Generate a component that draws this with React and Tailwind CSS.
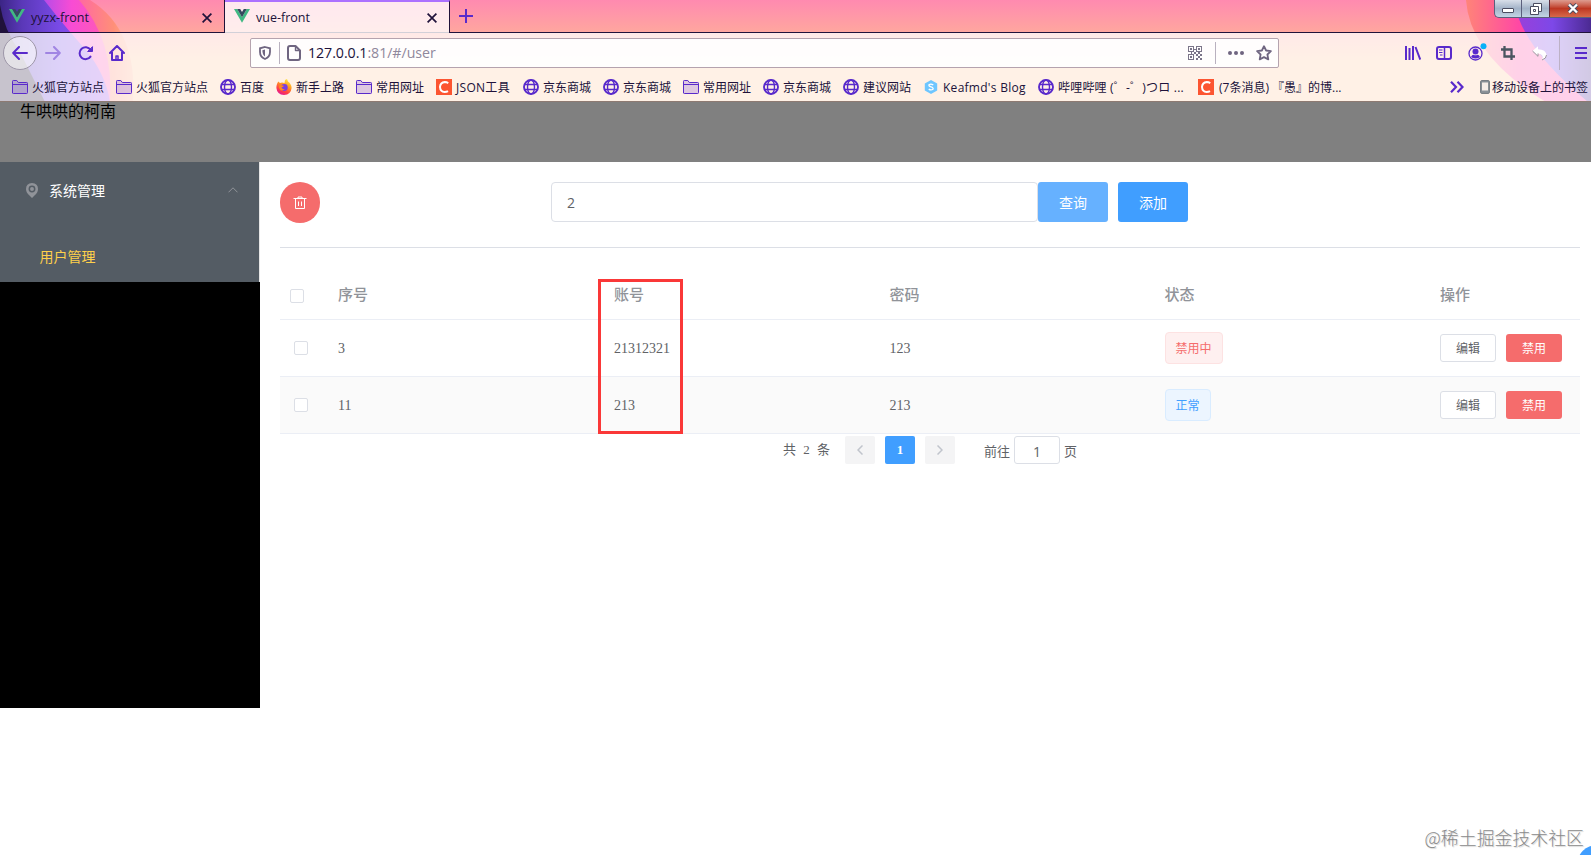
import { useState } from "react";
import clsx from "clsx";

const bookmarks = [
  { icon: "folder", label: "火狐官方站点", width: "w-[72px]" },
  { icon: "folder", label: "火狐官方站点", width: "w-[72px]" },
  { icon: "globe", label: "百度", width: "w-6" },
  { icon: "firefox", label: "新手上路", width: "w-12" },
  { icon: "folder", label: "常用网址", width: "w-12" },
  { icon: "csdn", label: "JSON工具", width: "w-[55px] tracking-[0.3px]" },
  { icon: "globe", label: "京东商城", width: "w-12" },
  { icon: "globe", label: "京东商城", width: "w-12" },
  { icon: "folder", label: "常用网址", width: "w-12" },
  { icon: "globe", label: "京东商城", width: "w-12" },
  { icon: "globe", label: "建议网站", width: "w-12" },
  { icon: "hexo", label: "Keafmd's Blog", width: "w-[83px] tracking-[0.27px]" },
  { icon: "globe", label: "哔哩哔哩 (゜-゜)つロ ...", width: "w-[128px] tracking-[0.2px]" },
  { icon: "csdn", label: "(7条消息) 『愚』的博...", width: "w-[130px] pl-px" },
];

const users = [
  { id: 3, account: "21312321", password: "123", disabled: true },
  { id: 11, account: "213", password: "213", disabled: false },
];

function VueLogo() {
  return (
    <svg width="16" height="14" viewBox="0 0 16 14" className="shrink-0">
      <path d="M0 0h3.2L8 8.2 12.8 0H16L8 13.8z" fill="#41b883" />
      <path d="M3.2 0h3L8 3l1.8-3h3L8 8.2z" fill="#35495e" />
    </svg>
  );
}

function CloseIcon() {
  return (
    <svg width="10" height="10" viewBox="0 0 10 10" stroke="#20123a" strokeWidth="1.7" className="shrink-0">
      <path d="M.6.6l8.8 8.8M9.4.6L.6 9.4" />
    </svg>
  );
}

function BookmarkIcon({ type }) {
  if (type === "folder") {
    return (
      <svg width="16" height="16" viewBox="0 0 16 16" fill="#592acb33" stroke="#592acb" className="shrink-0">
        <path d="M.5 14V2.3Q.5 1.5 1.3 1.5h3.5l1.5 2h8.4q.8 0 .8.8V13.700q0 .8-.8.8H1.300Q.5 14.500.5 13.700zM.5 5.500h15" />
      </svg>
    );
  }
  if (type === "globe") {
    return (
      <svg width="16" height="16" viewBox="0 0 16 16" fill="none" stroke="#592acb" strokeWidth="1.4" className="shrink-0">
        <circle cx="8" cy="8" r="7" strokeWidth="1.9" />
        <ellipse cx="8" cy="8" rx="3.5" ry="7" />
        <path d="M1.500 5.500h13M1.500 10.500h13" />
      </svg>
    );
  }
  if (type === "firefox") {
    return (
      <svg width="16" height="16" viewBox="0 0 16 16" className="shrink-0">
        <defs>
          <linearGradient id="fox" x1="0.8" y1="0" x2="0.3" y2="1">
            <stop offset="0" stopColor="#fff04a" />
            <stop offset=".4" stopColor="#ff9a1f" />
            <stop offset=".75" stopColor="#ff3b4a" />
            <stop offset="1" stopColor="#e0199b" />
          </linearGradient>
        </defs>
        <path d="M1 5l1.200-2.500L4 4l2-.5L8.500 4 9 1l2-1 1 2.500Q15.500 5 15.600 9 15 15.500 8 16 1 15.500.4 9 .3 7 1 5z" fill="url(#fox)" />
        <circle cx="8.300" cy="8.500" r="3.400" fill="#7a3fe0" />
        <path d="M3 6.500q3-.5 5 .3-1 1.500-2.600 1.500 1 2.500 3.600 1.800-2 2.400-4.600.9Q2.500 9.500 3 6.500z" fill="#ff8a1f" />
      </svg>
    );
  }
  if (type === "csdn") {
    return (
      <svg width="16" height="16" viewBox="0 0 16 16" className="shrink-0">
        <path d="M0 0h16v16H0z" fill="#fc5531" />
        <path d="M12.200 4.200Q10.800 3 8.800 3 4.300 3.400 4 8q.3 4.800 4.600 5 2 0 3.400-.9" fill="none" stroke="#fff" strokeWidth="2" />
      </svg>
    );
  }
  return (
    <svg width="14" height="16" viewBox="0 0 14 16" className="mx-px shrink-0">
      <path d="M7 1l6.200 3.500v7L7 15 .8 11.500v-7z" fill="#6ec6ff" />
      <path d="M9.300 6Q7 4.400 5 5.700 4.500 7.300 7 7.900q2.600.7 2 2.300Q7 11.600 4.700 10.100" fill="none" stroke="#fff" strokeWidth="1.300" />
    </svg>
  );
}

function ThemeArt() {
  return (
    <svg width="1591" height="102" viewBox="0 0 1591 102" className="absolute inset-0">
      <defs>
        <linearGradient id="sky" x1="0" y1="0" x2="0" y2="1">
          <stop offset="0" stopColor="#ff8ab0" />
          <stop offset=".31" stopColor="#ffa69f" />
          <stop offset=".6" stopColor="#ffc69c" />
          <stop offset="1" stopColor="#ffc89c" />
        </linearGradient>
        <linearGradient id="violet" x1="0" y1="0" x2="1" y2="0">
          <stop offset="0" stopColor="#3b2585" />
          <stop offset=".2" stopColor="#5a38b8" />
          <stop offset=".55" stopColor="#7a4be8" />
          <stop offset="1" stopColor="#a04fe8" />
        </linearGradient>
        <linearGradient id="magenta" x1="0" y1="0" x2="1" y2="0">
          <stop offset=".4" stopColor="#b84be8" />
          <stop offset=".65" stopColor="#f84cd4" />
          <stop offset="1" stopColor="#ff5cae" />
        </linearGradient>
        <linearGradient id="violetRight" x1="0" y1="0" x2="1" y2="0">
          <stop offset="0" stopColor="#9c3fd8" />
          <stop offset=".5" stopColor="#7d48e8" />
          <stop offset="1" stopColor="#4b2a92" />
        </linearGradient>
        <linearGradient id="magentaRight" x1="0" y1="0" x2="1" y2="0">
          <stop offset="0" stopColor="#ff8478" />
          <stop offset=".42" stopColor="#ff48a4" />
          <stop offset="1" stopColor="#ff45b4" />
        </linearGradient>
        <linearGradient id="orange" x1="0" y1="0" x2="1" y2="0">
          <stop offset=".6" stopColor="#ff6aa0" />
          <stop offset=".85" stopColor="#ff8f78" />
          <stop offset="1" stopColor="#ffb08c" />
        </linearGradient>
      </defs>
      <path d="M0 0h1591v102H0z" fill="url(#sky)" />
      <path d="M0 0h90Q138 30 133 102H0z" fill="url(#orange)" />
      <path d="M0 0h79Q114 40 110 102H0z" fill="url(#magenta)" />
      <path d="M0 0h44Q66 28 86 50 106 75 110 102H0z" fill="url(#violet)" />
      <path d="M0 5Q4 30 20 52L45 102H0z" fill="#20123a" />
      <path d="M1466 0Q1470 56 1546 102H1591V0z" fill="url(#magentaRight)" />
      <path d="M1514 0Q1520 46 1588 102H1591V0z" fill="url(#violetRight)" />
    </svg>
  );
}

function Tab({ title, active }) {
  return (
    <div
      className={clsx(
        "flex w-[225px] items-center border-r border-[#20123a] pl-[9px] pr-2 text-[12.5px] text-[#20123a]",
        active ? "h-[33px] border-t-2 border-t-[#ac70ff] bg-white/80 pb-[3px]" : "h-8"
      )}
    >
      <VueLogo />
      <span className="ml-[6px] mt-[4px] flex-1">{title}</span>
      <span className="mr-[4px] mt-[3px]">
        <CloseIcon />
      </span>
    </div>
  );
}

function WindowButtons() {
  return (
    <div className="absolute right-0 top-0 flex h-[18px] w-[97px] overflow-hidden rounded-bl-[5px] border-b border-l border-[#5b5f7c] bg-gradient-to-b from-[#d9dfe9] via-[#a3b3c8] to-[#c3d5e4]">
      <div className="flex w-[27px] items-center justify-center border-r border-[#5b5f7c] pt-[3px]">
        <span className="h-[5px] w-3 rounded-[1px] border border-[#4a4d60] bg-white" />
      </div>
      <div className="flex w-[28px] items-center justify-center border-r border-[#5b2a3c]">
        <svg width="12" height="12" viewBox="0 0 12 12" fill="#fff" stroke="#4a4d60">
          <path d="M3.500.5h8v8h-8z" />
          <path d="M.5 3.500h8v8h-8z" />
          <path d="M3.500 6.500h2v2h-2z" />
        </svg>
      </div>
      <div className="flex flex-1 items-center justify-center bg-gradient-to-b from-[#dd9c90] via-[#bd3722] to-[#d8684a] pl-[5px]">
        <svg width="12" height="11" viewBox="0 0 12 11">
          <path d="M2 1.500l8 8M10 1.500l-8 8" stroke="#4a4d60" strokeWidth="4.200" />
          <path d="M2 1.500l8 8M10 1.500l-8 8" stroke="#fff" strokeWidth="2.400" />
        </svg>
      </div>
    </div>
  );
}

function TabStrip() {
  return (
    <div className="flex h-[33px] border-b border-[#20123a]">
      <Tab title="yyzx-front" />
      <Tab title="vue-front" active />
      <svg width="14" height="14" viewBox="0 0 14 14" stroke="#592acb" strokeWidth="2" className="ml-[9px] mt-[9px]">
        <path d="M7 0v14M0 7h14" />
      </svg>
    </div>
  );
}

function NavBar() {
  return (
    <div className="flex h-10 items-center">
      <div className="ml-[3px] flex size-[34px] items-center justify-center rounded-full border border-[#9d96a8] bg-white/50">
        <svg width="16" height="14" viewBox="0 0 16 14" fill="none" stroke="#592acb" strokeWidth="2" strokeLinecap="round" strokeLinejoin="round">
          <path d="M15 7H1.500M7 1L1.200 7 7 13" />
        </svg>
      </div>
      <svg width="16" height="14" viewBox="0 0 16 14" fill="none" stroke="#592acb" strokeWidth="2" strokeLinecap="round" strokeLinejoin="round" className="ml-2 opacity-45">
        <path d="M1 7h13.500M9 1l5.800 6L9 13" />
      </svg>
      <svg width="16" height="16" viewBox="0 0 16 16" fill="none" stroke="#592acb" strokeWidth="2" strokeLinecap="round" className="ml-[17px]">
        <path d="M12.500 11.600A6 6 0 1 1 12.500 4.700" />
        <path d="M14.500 2v4.500H10z" fill="#592acb" strokeWidth="1" />
      </svg>
      <svg width="16" height="16" viewBox="0 0 16 16" fill="none" stroke="#592acb" strokeWidth="2" strokeLinecap="round" strokeLinejoin="round" className="ml-[15px]">
        <path d="M1 8l7-7 7 7M3 7v8h10V7" />
        <path d="M7 15v-4h2v4" strokeWidth="1.500" />
      </svg>

      <div className="ml-[125px] flex h-[30px] w-[1029px] items-center rounded-[2px] border border-[#b5a3ae] bg-white/90">
        <svg width="12" height="14" viewBox="0 0 12 14" fill="none" stroke="#6f6580" strokeWidth="1.800" className="ml-2">
          <path d="M6 1L11 2.300V6q0 5-5 7-5-2-5-7V2.300z" />
          <path d="M6 3.500v7Q3.400 9 3.400 4.200z" fill="#6f6580" stroke="none" />
        </svg>
        <span className="ml-2 h-[22px] w-px bg-[#b9b1bf]" />
        <svg width="14" height="16" viewBox="0 0 14 16" fill="none" stroke="#6f6580" strokeWidth="2" strokeLinejoin="round" className="ml-[7px]">
          <path d="M3 1h5.500L13 5.500V13q0 2-2 2H3q-2 0-2-2V3q0-2 2-2z" />
          <path d="M8.500 1v4.500H13" strokeWidth="1.400" />
        </svg>
        <span className="ml-[7px] w-[130px] whitespace-nowrap text-[14.2px] tracking-[-0.05px] text-[#20123a]">
          127.0.0.1<span className="text-[#8f889c]">:81/#/user</span>
        </span>
        <div className="flex-1" />
        <svg width="14" height="14" viewBox="0 0 14 14" fill="#7b7589">
          <path fillRule="evenodd" d="M0 0h6v6H0zM1 1v4h4V1zM8 0h6v6H8zM9 1v4h4V1zM0 8h6v6H0zM1 9v4h4V9z" />
          <path d="M2 2h2v2H2zM10 2h2v2h-2zM2 10h2v2H2zM6 3h2v1H6zM6 6h2v2H6zM3 6h1v2H3zM8 8h2v2H8zM10 10h2v2h-2zM12 8h2v2h-2zM8 12h2v2H8zM12 12h2v2h-2zM10 6h2v2h-2z" />
        </svg>
        <span className="ml-[13px] h-[22px] w-px bg-[#b9b1bf]" />
        <svg width="16" height="4" viewBox="0 0 16 4" fill="#6f6580" className="ml-3">
          <circle cx="2" cy="2" r="2" />
          <circle cx="8" cy="2" r="2" />
          <circle cx="14" cy="2" r="2" />
        </svg>
        <svg width="16" height="16" viewBox="0 0 16 16" fill="none" stroke="#6f6580" strokeWidth="1.800" strokeLinejoin="round" className="ml-3 mr-[6px]">
          <path d="M8 1.200l2.100 4.300 4.800.7-3.500 3.300.9 4.900L8 12.100l-4.300 2.300.9-4.900L1.100 6.200l4.800-.7z" />
        </svg>
      </div>

      <svg width="16" height="14" viewBox="0 0 16 14" stroke="#592acb" strokeWidth="2" className="ml-[126px]">
        <path d="M1 0v14M4.500 2v12M8 0v14M10.500 1l4.800 12.600" />
      </svg>
      <svg width="16" height="14" viewBox="0 0 16 14" fill="none" stroke="#592acb" strokeWidth="2" className="ml-[15px]">
        <rect x="1" y="1" width="14" height="12" rx="2" />
        <path d="M8.500 1v12" strokeWidth="1.500" />
        <path d="M3 4h3.500M3 6.500h3.500M4 9h2.500" strokeWidth="1" />
      </svg>
      <svg width="19" height="18" viewBox="0 0 19 18" fill="none" stroke="#592acb" className="mb-[3px] ml-4">
        <circle cx="7.500" cy="10.500" r="6.500" strokeWidth="1.300" />
        <circle cx="7.500" cy="8.500" r="3" fill="#592acb" stroke="none" />
        <path d="M3 14q1-2.200 2.600-2.200 1.900 1 3.800 0Q11 11.800 12 14q-4.500 3-9 0z" fill="#592acb" stroke="none" />
        <circle cx="15.500" cy="3.200" r="3" fill="#0ab0f8" stroke="none" />
      </svg>
      <svg width="14" height="14" viewBox="0 0 14 14" fill="none" stroke="#4a5560" strokeWidth="2.300" className="ml-[14px]">
        <path d="M3.500 0v10.500H14M0 3.500h10.500V14" />
      </svg>
      <svg width="16" height="16" viewBox="0 0 16 16" className="ml-[17px]">
        <path d="M.5 6L6 1.200v3Q14 4.500 14.500 10q0 3.500-4.500 5Q12.800 9.500 6 8.500v2.800z" fill="#fff" />
        <path d="M.5 6L6 11.300V8.500M10 15q4.500-1.500 4.500-5" fill="none" stroke="#9a949c" strokeWidth="1" />
      </svg>
      <span className="ml-[11px] h-[34px] w-px bg-[#bdb1c6]" />
      <svg width="12" height="12" viewBox="0 0 12 12" stroke="#592acb" strokeWidth="2" className="ml-[15px]">
        <path d="M0 1h12M0 6h12M0 11h12" />
      </svg>
    </div>
  );
}

function BookmarksBar() {
  return (
    <div className="flex h-7 items-center pl-3 text-[12px] text-[#20123a]">
      {bookmarks.map((item, index) => (
        <div key={index} className="mr-3 flex shrink-0 items-center gap-1">
          <BookmarkIcon type={item.icon} />
          <span className={clsx("mt-px whitespace-nowrap", item.width)}>{item.label}</span>
        </div>
      ))}
      <svg width="14" height="12" viewBox="0 0 14 12" fill="none" stroke="#592acb" strokeWidth="2.200" className="ml-auto mr-4 shrink-0">
        <path d="M1 .8L6 6l-5 5.200M7.500.8l5 5.200-5 5.200" />
      </svg>
      <svg width="10" height="14" viewBox="0 0 10 14" className="shrink-0">
        <rect x=".6" y=".6" width="8.800" height="12.800" rx="1.200" fill="#8b9298" stroke="#70777d" />
        <path d="M2 2.500h6v8H2z" fill="#f5ece6" />
      </svg>
      <span className="ml-[2px] mr-[3px] mt-px whitespace-nowrap">移动设备上的书签</span>
    </div>
  );
}

function Browser() {
  return (
    <div className="relative h-[102px] overflow-hidden font-['Open_Sans','Noto_Sans_CJK_SC',sans-serif]">
      <ThemeArt />
      <div className="relative">
        <TabStrip />
        <div className="h-[69px] border-b border-[#8d7a72] bg-white/75">
          <NavBar />
          <BookmarksBar />
        </div>
      </div>
      <WindowButtons />
    </div>
  );
}

function Sidebar() {
  return (
    <aside className="h-[546px] w-[260px] bg-black text-sm">
      <div className="h-[120px] border-r border-[#e6e6e6] bg-[#545c64]">
        <div className="flex h-[56px] items-center pl-[26px] pr-[21px] text-white">
          <svg width="12" height="15" viewBox="0 0 12 15">
            <path d="M6 0q6 .3 6 6 0 3.500-3.500 6.500L6 15l-2.500-2.500Q0 9.500 0 6 0 .3 6 0z" fill="#909399" />
            <circle cx="6" cy="6" r="2.700" fill="none" stroke="#545c64" strokeWidth="1.500" />
          </svg>
          <span className="ml-[11px] mt-[4px] flex-1">系统管理</span>
          <svg width="10" height="6" viewBox="0 0 10 6" fill="none" stroke="#909399">
            <path d="M.5 5.300L5 .8l4.500 4.500" />
          </svg>
        </div>
        <div className="mt-[14px] flex h-[50px] items-center pl-[39.5px] pt-[2px] text-[#ffd04b]">用户管理</div>
      </div>
    </aside>
  );
}

function Checkbox({ className }) {
  return <span className={clsx("block size-[14px] rounded-[2px] border border-[#dcdfe6] bg-white", className)} />;
}

const rowGrid = "grid grid-cols-[48px_276px_275.5px_275px_275.5px_1fr] items-center border-b border-[#ebeef5]";

function UserTable() {
  return (
    <div className="relative mt-[24px] text-sm text-[#606266]">
      <div className={clsx(rowGrid, "h-[48px] text-[15px] font-medium text-[#909399]")}>
        <Checkbox className="ml-[10px]" />
        {["序号", "账号", "密码", "状态", "操作"].map((name) => (
          <span key={name} className="pl-[10px] pt-px">{name}</span>
        ))}
      </div>
      {users.map((user, index) => (
        <div key={user.id} className={clsx(rowGrid, "h-[57px]", index % 2 === 1 && "bg-[#fafafa]")}>
          <Checkbox className="ml-[14px]" />
          <span className="pl-[10px] pt-[2px]">{user.id}</span>
          <span className="pl-[10px] pt-[2px]">{user.account}</span>
          <span className="pl-[10px] pt-[2px]">{user.password}</span>
          <div className="pl-[10px]">
            <span
              className={clsx(
                "inline-flex h-8 items-center rounded border px-[10px] pt-px align-middle text-xs",
                user.disabled
                  ? "border-[#fde2e2] bg-[#fef0f0] text-[#f56c6c]"
                  : "border-[#d9ecff] bg-[#ecf5ff] text-[#409eff]"
              )}
            >
              {user.disabled ? "禁用中" : "正常"}
            </span>
          </div>
          <div className="flex gap-[10px] pl-[10px]">
            <button className="h-7 w-14 rounded-[3px] border border-[#dcdfe6] bg-white pt-px text-xs">编辑</button>
            <button className="h-7 w-14 rounded-[3px] bg-[#f56c6c] pt-px text-xs text-white">禁用</button>
          </div>
        </div>
      ))}
      {/* highlight around the account column */}
      <div className="absolute left-[318px] top-[7px] h-[155px] w-[85px] border-[3px] border-[#fa3838]" />
    </div>
  );
}

function Pagination() {
  return (
    <div className="mt-[2px] flex h-7 items-center pl-[503px] text-[13px] text-[#606266]">
      <span className="w-[62px] whitespace-nowrap [word-spacing:4px]">共 2 条</span>
      <div className="flex gap-[10px]">
        <span className="flex h-7 w-[30px] items-center justify-center rounded-[2px] bg-[#f4f4f5]">
          <svg width="6" height="10" viewBox="0 0 6 10" fill="none" stroke="#c0c4cc" strokeWidth="1.500">
            <path d="M5.500.5L1 5l4.500 4.500" />
          </svg>
        </span>
        <span className="flex h-7 w-[30px] items-center justify-center rounded-[2px] bg-[#409eff] font-bold text-white">1</span>
        <span className="flex h-7 w-[30px] items-center justify-center rounded-[2px] bg-[#f4f4f5]">
          <svg width="6" height="10" viewBox="0 0 6 10" fill="none" stroke="#c0c4cc" strokeWidth="1.500">
            <path d="M.5.5L5 5 .5 9.500" />
          </svg>
        </span>
      </div>
      <span className="ml-[29px] mt-[3px]">前往</span>
      <span className="ml-[4px] flex h-7 w-[46px] items-center justify-center rounded-[3px] border border-[#dcdfe6] pt-[3px] font-['Open_Sans',sans-serif] text-sm">1</span>
      <span className="ml-[4px] mt-[3px]">页</span>
    </div>
  );
}

function UserPage() {
  const [keyword, setKeyword] = useState("2");

  return (
    <main className="w-[1331px] pl-5 pr-[11px] pt-5">
      <div className="flex h-[41px] items-start font-['Open_Sans','Noto_Sans_CJK_SC',sans-serif] text-sm">
        <button className="flex h-[41px] w-10 items-center justify-center rounded-full bg-[#f56c6c]">
          <svg width="14" height="14" viewBox="0 0 14 14" fill="none" stroke="#fff">
            <path d="M.5 2.500h13M5 2V1h4v1M2.500 2.500v10h9v-10M5.500 5.500v4.500M8.500 5.500v4.500" />
          </svg>
        </button>
        <input
          value={keyword}
          onChange={(e) => setKeyword(e.target.value)}
          className="ml-[231px] h-10 w-[487px] rounded border border-[#dcdfe6] px-[15px] pt-px text-[#606266]"
        />
        <button className="h-10 w-[70px] rounded-[3px] bg-[#66b1ff] pt-px text-white">查询</button>
        <button className="ml-[10px] h-10 w-[70px] rounded-[3px] bg-[#409eff] pt-px text-white">添加</button>
      </div>
      <div className="mt-6 h-px bg-[#dcdfe6]" />
      <UserTable />
      <Pagination />
    </main>
  );
}

export default function App() {
  return (
    <div className="relative h-[855px] w-[1591px] overflow-hidden bg-white font-['Liberation_Serif','Noto_Sans_CJK_SC',serif]">
      <Browser />
      <header className="h-[60px] bg-[#808080] pl-5 text-base leading-5 text-black">牛哄哄的柯南</header>
      <div className="flex items-start">
        <Sidebar />
        <UserPage />
      </div>
      <div className="absolute bottom-[4px] right-[7px] whitespace-nowrap font-['Noto_Sans_CJK_SC',sans-serif] text-[17.9px] font-light text-[#8a8a8a] [text-shadow:1px_1px_1px_#d4d4d4]">
        @稀土掘金技术社区
      </div>
      <div className="absolute -bottom-[30px] -right-[26px] size-10 rounded-full bg-[#409eff]" />
    </div>
  );
}
